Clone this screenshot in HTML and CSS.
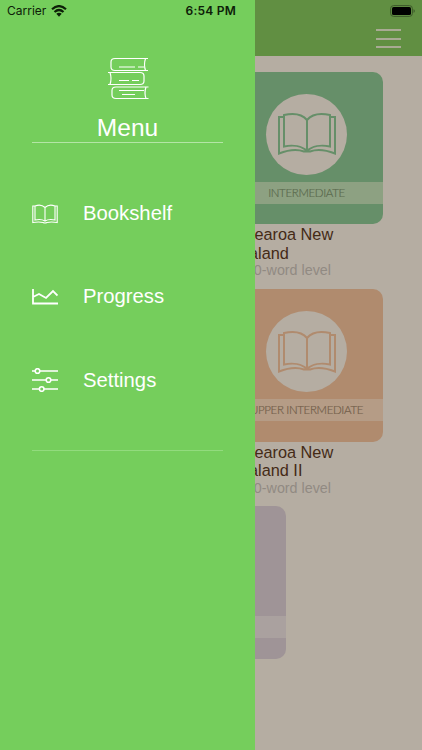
FILE: index.html
```html
<!DOCTYPE html>
<html lang="en">
<head>
<meta charset="utf-8">
<title>Menu</title>
<link rel="stylesheet" href="styles.css">
</head>
<body>
<svg width="0" height="0" class="defs">
  <symbol id="book" viewBox="0 0 60 44">
    <path d="M7 5H2V41.5C11 38 20 37 27 39.5H33C40 37 49 38 58 41.5V5H53M30 8C25 2 16 1 7 3V34.5C16 32.500 25 34 30 39C35 34 44 32.500 53 34.500V3C44 1 35 2 30 8V39"/>
  </symbol>
</svg>
<div class="app">
  <main class="page">
    <header class="topbar">
      <div class="burger"><i></i><i></i><i></i></div>
    </header>
    <section class="shelf">
      <div class="row">
        <article class="book green">
          <div class="cover">
            <div class="disc"><svg><use href="#book"/></svg></div>
            <div class="band">INTERMEDIATE</div>
          </div>
          <h2>Aotearoa New Zealand</h2>
          <p>1200-word level</p>
        </article>
      </div>
      <div class="row">
        <article class="book orange">
          <div class="cover">
            <div class="disc"><svg><use href="#book"/></svg></div>
            <div class="band">UPPER INTERMEDIATE</div>
          </div>
          <h2>Aotearoa New Zealand II</h2>
          <p>1600-word level</p>
        </article>
      </div>
      <div class="row last">
        <article class="book purple">
          <div class="cover"><div class="band"></div></div>
        </article>
      </div>
    </section>
  </main>

  <nav class="drawer">
    <div class="brand">
      <svg class="stack" viewBox="0 0 42 44">
        <path d="M41 1.500H8Q4 1.500 4 5V10Q4 13.500 8 13.500H41M38.500 1.500Q36.500 7.500 38.500 13.500M12 10H28M31 10H37"/>
        <path d="M1 15.500H33Q37 15.500 37 19V24Q37 27.500 33 27.500H1M3 15.500Q5 21.500 3 27.500M12 23.500H22M25 23.500H32"/>
        <path d="M41.500 30H9Q5 30 5 33.500V38Q5 41.500 9 41.500H41.500M39 30Q37 36 39 41.500M12 33.500H37M15 37.500H28"/>
      </svg>
      <h1>Menu</h1>
    </div>
    <ul>
      <li>
        <svg viewBox="0 0 26 20"><path class="thin" d="M3 2H.8V18.5Q7 17.5 11 18.5Q13 19.5 15 18.5Q19 17.5 25.2 18.5V2H23M13 3.500Q9-.3 3 2V16Q9 14.5 13 17Q17 14.5 23 16V2Q17-.3 13 3.500V17"/></svg>
        <span>Bookshelf</span>
      </li>
      <li>
        <svg viewBox="0 0 26 20"><path d="M1 2V16.5H26M1 10L7 7L14 11L21 4L25.5 8.5"/></svg>
        <span>Progress</span>
      </li>
      <li>
        <svg class="sliders" viewBox="0 0 26 24"><path d="M0 3H3M8 3H26M0 12H14M19 12H26M0 21H7M12 21H26"/><circle cx="5.5" cy="3" r="2.3"/><circle cx="16.5" cy="12" r="2.3"/><circle cx="9.7" cy="21" r="2.3"/></svg>
        <span>Settings</span>
      </li>
    </ul>
  </nav>

  <div class="status">
    <span class="carrier">Carrier</span>
    <svg class="wifi" viewBox="0 0 16 12"><path d="M1 4.2Q8-2 15 4.2M3.5 7Q8 3 12.5 7"/><path class="dot" d="M5.3 8.8Q8 6.5 10.7 8.8L8 11.7Z"/></svg>
    <span class="clock">6:54 PM</span>
    <svg class="battery" viewBox="0 0 26 12"><rect class="case" x=".6" y=".6" width="21.8" height="10.8" rx="3"/><rect x="2" y="2" width="19" height="8" rx="1.6"/><path d="M23.7 4Q25.6 6 23.7 8Z" opacity=".5"/></svg>
  </div>
</div>
</body>
</html>
```
FILE: styles.css
```css
* { box-sizing: border-box; margin: 0; padding: 0; }
body { font-family: "Liberation Sans", Arial, sans-serif; }
.defs { display: block; }
.app { position: relative; width: 422px; height: 750px; overflow: hidden; background: #b5ada2; }
svg { display: block; fill: none; }

.topbar { height: 56px; background: #618f42; display: flex; justify-content: flex-end; padding: 29px 21px 0 0; }
.burger { width: 25px; height: 19px; display: flex; flex-direction: column; justify-content: space-between; }
.burger i { height: 2px; background: #a9aa94; }

.shelf { padding-top: 15.7px; }
.row { height: 217.4px; display: flex; justify-content: flex-end; padding-right: 39px; }
.row.last { justify-content: center; padding: 0 4px 0 0; }
.book { width: 153px; }
.cover { height: 152.5px; border-radius: 10px; padding-top: 22px; background: var(--tone); overflow: hidden; }
.disc { width: 81px; height: 81px; margin: 0 auto; border-radius: 50%; background: #b5ada2; display: flex; align-items: center; justify-content: center; }
.disc svg { width: 60px; height: 44px; stroke: var(--tone); stroke-width: 2; }
.band { height: 22px; margin-top: 7px; background: var(--band); color: var(--ink); font: 300 11.5px/22px Lato, sans-serif; letter-spacing: -0.35px; -webkit-text-stroke: 0.2px var(--ink); text-align: center; white-space: nowrap; }
.green { --tone: #668f69; --band: #8da182; --ink: #5a6a4d; }
.orange { --tone: #b08b6e; --band: #b59c86; --ink: #715d49; }
.purple { --tone: #9f9497; --band: #aaa19f; }
.purple .band { margin-top: 88px; }
.book h2 { width: 130px; margin-top: 1px; font-size: 16.3px; font-weight: 400; line-height: 18.6px; color: #442a16; }
.book p { font-size: 14.3px; line-height: 17px; color: #918a82; }

.drawer { position: absolute; left: 0; top: 0; width: 255px; height: 750px; background: #75ce5c; color: #fff; padding: 57px 32px 0; }
.brand { height: 86px; border-bottom: 1px solid #b4e5a6; display: flex; flex-direction: column; align-items: center; }
.stack { width: 42px; height: 44px; stroke: #fff; stroke-width: 1.2; }
.brand h1 { margin-top: 13px; font-size: 24.5px; font-weight: 400; line-height: 28px; }
.drawer ul { list-style: none; height: 308px; padding-top: 29px; border-bottom: 1px solid #92db7e; }
.drawer li { height: 83.3px; display: flex; align-items: center; gap: 25px; font-size: 20.3px; }
.drawer li svg { width: 26px; height: 20px; stroke: #fff; stroke-width: 1.8; }
.drawer li svg.sliders { height: 24px; stroke-width: 1.6; }
.drawer .thin { stroke-width: 1.1; }

.status { position: absolute; left: 0; top: 0; width: 422px; height: 21px; padding: 0 6px 0 7px; display: flex; align-items: center; color: #0d2008; font-family: Inter, sans-serif; }
.carrier { width: 44px; font-size: 12px; white-space: nowrap; }
.wifi { width: 16px; height: 12px; stroke: #0d2008; stroke-width: 2.2; }
.wifi .dot { fill: #0d2008; stroke: none; }
.clock { margin-left: 118.5px; font-size: 12px; font-weight: 600; letter-spacing: 0.25px; white-space: nowrap; }
.battery { width: 26px; height: 12px; margin-left: auto; fill: #000; }
.battery .case { fill: none; stroke: #3d592a; stroke-width: 1; }
```
